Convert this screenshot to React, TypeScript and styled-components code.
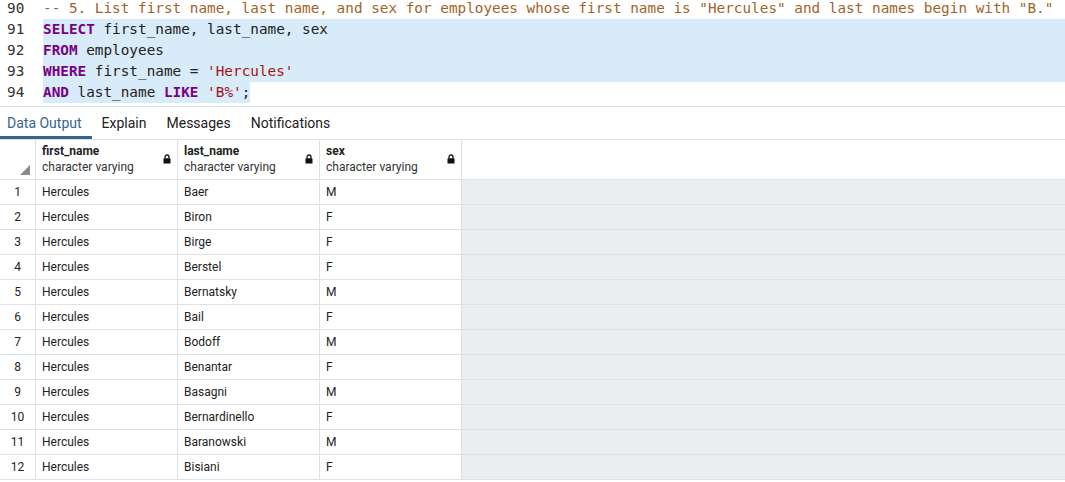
import React from "react";
import styled, { createGlobalStyle } from "styled-components";

const Global = createGlobalStyle`
  html, body { margin: 0; padding: 0; background: #fff; }
  body { font-family: Roboto, "Liberation Sans", sans-serif; overflow: hidden; }
`;

const Page = styled.div`
  width: 1065px;
  height: 482px;
  display: flex;
  flex-direction: column;
  overflow: hidden;
  background: #fff;
`;

const Editor = styled.div`
  height: 106px;
  border-bottom: 1px solid #dde0e6;
  overflow: hidden;
  flex-shrink: 0;
`;

const Lines = styled.div`
  margin-top: -2px;
  display: flex;
  flex-direction: column;
`;

const Line = styled.div`
  display: flex;
  height: 21px;
  line-height: 21px;
  font-family: "DejaVu Sans Mono", "Liberation Mono", monospace;
  font-size: 14.35px;
`;

const Gutter = styled.div`
  width: 36px;
  padding-left: 7px;
  color: #333;
  flex-shrink: 0;
`;

const Code = styled.div<{ $sel: "full" | "part" | "none" }>`
  flex: ${(p) => (p.$sel === "full" ? 1 : "0 0 auto")};
  background: ${(p) => (p.$sel === "none" ? "transparent" : "#d7ebf9")};
  color: #222;
  white-space: pre;
`;

const Kw = styled.span`
  color: #770088;
  font-weight: bold;
`;
const Str = styled.span`
  color: #aa1111;
`;
const Cmt = styled.span`
  color: #a0642a;
`;

const Tabs = styled.div`
  height: 32px;
  border-bottom: 1px solid #dde0e6;
  display: flex;
  align-items: stretch;
  flex-shrink: 0;
`;

const Tab = styled.div<{ $active?: boolean }>`
  padding: 0 10px 0 7px;
  margin-right: 3px;
  font-size: 14px;
  display: flex;
  align-items: center;
  color: ${(p) => (p.$active ? "#326690" : "#222")};
  border-bottom: 3px solid ${(p) => (p.$active ? "#326690" : "transparent")};
  padding-top: 2px;
`;

const Grid = styled.div`
  flex: 1;
  display: flex;
  flex-direction: column;
  overflow: hidden;
`;

const Row = styled.div<{ $head?: boolean }>`
  display: flex;
  height: ${(p) => (p.$head ? "39px" : "24px")};
  border-bottom: 1px solid #dde0e6;
  flex-shrink: 0;
`;

const Cell = styled.div<{ $w: number }>`
  width: ${(p) => p.$w}px;
  flex-shrink: 0;
  border-right: 1px solid #dde0e6;
  box-sizing: border-box;
  font-size: 12px;
  color: #222;
  display: flex;
  align-items: center;
  padding-left: 6px;
  position: relative;
`;

const NumCell = styled(Cell)`
  justify-content: center;
  padding-left: 0;
`;

const Filler = styled.div<{ $head?: boolean }>`
  flex: 1;
  background: ${(p) => (p.$head ? "#fff" : "#ebedf1")};
`;

const HeadText = styled.div`
  display: flex;
  flex-direction: column;
  line-height: 16px;
  flex: 1;
  margin-top: -2px;
`;

const HeadName = styled.span`
  font-weight: bold;
  color: #222;
`;

const HeadType = styled.span`
  color: #333;
`;

const LockWrap = styled.div`
  width: 8px;
  margin-right: 6px;
  display: flex;
  align-items: center;
  margin-top: -2px;
`;

const SortMark = styled.svg`
  position: absolute;
  right: 5px;
  bottom: 4px;
`;

const Lock = () => (
  <LockWrap>
    <svg width="8" height="10" viewBox="0 0 8 10">
      <path d="M2 4.5 V3 a2 2 0 0 1 4 0 V4.5" fill="none" stroke="#111" strokeWidth="1.3" />
      <rect x="0.5" y="4.3" width="7" height="5.2" rx="0.6" fill="#111" />
    </svg>
  </LockWrap>
);

const rows: [string, string][] = [
  ["Baer", "M"],
  ["Biron", "F"],
  ["Birge", "F"],
  ["Berstel", "F"],
  ["Bernatsky", "M"],
  ["Bail", "F"],
  ["Bodoff", "M"],
  ["Benantar", "F"],
  ["Basagni", "M"],
  ["Bernardinello", "F"],
  ["Baranowski", "M"],
  ["Bisiani", "F"],
];

const cols = ["first_name", "last_name", "sex"];

export default function App() {
  return (
    <Page>
      <Global />
      <Editor>
        <Lines>
          <Line>
            <Gutter>90</Gutter>
            <Code $sel="none">
              <Cmt>-- 5. List first name, last name, and sex for employees whose first name is "Hercules" and last names begin with "B."</Cmt>
            </Code>
          </Line>
          <Line>
            <Gutter>91</Gutter>
            <Code $sel="full">
              <Kw>SELECT</Kw> first_name, last_name, sex
            </Code>
          </Line>
          <Line>
            <Gutter>92</Gutter>
            <Code $sel="full">
              <Kw>FROM</Kw> employees
            </Code>
          </Line>
          <Line>
            <Gutter>93</Gutter>
            <Code $sel="full">
              <Kw>WHERE</Kw> first_name = <Str>'Hercules'</Str>
            </Code>
          </Line>
          <Line>
            <Gutter>94</Gutter>
            <Code $sel="part">
              <Kw>AND</Kw> last_name <Kw>LIKE</Kw> <Str>'B%'</Str>;
            </Code>
          </Line>
        </Lines>
      </Editor>
      <Tabs>
        <Tab $active>Data Output</Tab>
        <Tab>Explain</Tab>
        <Tab>Messages</Tab>
        <Tab>Notifications</Tab>
      </Tabs>
      <Grid>
        <Row $head>
          <NumCell $w={36}>
            <SortMark width="10" height="10" viewBox="0 0 10 10">
              <polygon points="10,0 10,10 0,10" fill="#8a8a8a" />
            </SortMark>
          </NumCell>
          {cols.map((c) => (
            <Cell $w={142} key={c}>
              <HeadText>
                <HeadName>{c}</HeadName>
                <HeadType>character varying</HeadType>
              </HeadText>
              <Lock />
            </Cell>
          ))}
          <Filler $head />
        </Row>
        {rows.map(([ln, sex], i) => (
          <Row key={i}>
            <NumCell $w={36}>{i + 1}</NumCell>
            <Cell $w={142}>Hercules</Cell>
            <Cell $w={142}>{ln}</Cell>
            <Cell $w={142}>{sex}</Cell>
            <Filler />
          </Row>
        ))}
      </Grid>
    </Page>
  );
}
